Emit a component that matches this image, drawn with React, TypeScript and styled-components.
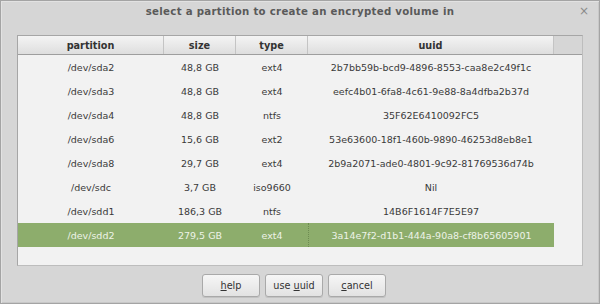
import React from "react"
import styled, { createGlobalStyle } from 'styled-components'

const Global = createGlobalStyle`
html, body {
    margin: 0;
    padding: 0;
    background: #d6d6d6;
}
`

type Row = {
    partition: string
    size: string
    type: string
    uuid: string
}

const rows: Row[] = [
    { partition: '/dev/sda2', size: '48,8 GB', type: 'ext4', uuid: '2b7bb59b-bcd9-4896-8553-caa8e2c49f1c' },
    { partition: '/dev/sda3', size: '48,8 GB', type: 'ext4', uuid: 'eefc4b01-6fa8-4c61-9e88-8a4dfba2b37d' },
    { partition: '/dev/sda4', size: '48,8 GB', type: 'ntfs', uuid: '35F62E6410092FC5' },
    { partition: '/dev/sda6', size: '15,6 GB', type: 'ext2', uuid: '53e63600-18f1-460b-9890-46253d8eb8e1' },
    { partition: '/dev/sda8', size: '29,7 GB', type: 'ext4', uuid: '2b9a2071-ade0-4801-9c92-81769536d74b' },
    { partition: '/dev/sdc', size: '3,7 GB', type: 'iso9660', uuid: 'Nil' },
    { partition: '/dev/sdd1', size: '186,3 GB', type: 'ntfs', uuid: '14B6F1614F7E5E97' },
    { partition: '/dev/sdd2', size: '279,5 GB', type: 'ext4', uuid: '3a14e7f2-d1b1-444a-90a8-cf8b65605901' },
]

const selected = 7

const App: React.FC = () => (
    <>
        <Global />
        <Window>
            <TitleBar>
                <Title>select a partition to create an encrypted volume in</Title>
                <Close>×</Close>
            </TitleBar>
            <Body>
                <Table>
                    <HeaderRow>
                        <HeadCell>partition</HeadCell>
                        <HeadCell>size</HeadCell>
                        <HeadCell>type</HeadCell>
                        <HeadCell>uuid</HeadCell>
                        <HeadFiller />
                    </HeaderRow>
                    <List>
                        {rows.map((r, i) => (
                            <TableRow key={r.partition}>
                                <Cell selected={i === selected}>{r.partition}</Cell>
                                <Cell selected={i === selected}>{r.size}</Cell>
                                <Cell selected={i === selected}>{r.type}</Cell>
                                <Cell selected={i === selected} focused={i === selected}>{r.uuid}</Cell>
                                <div />
                            </TableRow>
                        ))}
                    </List>
                </Table>
                <Buttons>
                    <Btn><u>h</u>elp</Btn>
                    <Btn>use <u>u</u>uid</Btn>
                    <Btn><u>c</u>ancel</Btn>
                </Buttons>
            </Body>
        </Window>
    </>
)

const Window = styled.div`
width: 600px;
height: 304px;
box-sizing: border-box;
border: 1px solid #a4a4a4;
box-shadow: inset 1px 1px 0 #e2e2e2, inset -1px -1px 0 #c8c8c8;
background: #d6d6d6;
font-family: "DejaVu Sans", sans-serif;
display: flex;
flex-direction: column;
`

const TitleBar = styled.div`
height: 20px;
position: relative;
display: flex;
align-items: center;
justify-content: center;
`

const Title = styled.div`
font-weight: bold;
font-size: 10.2px;
color: #5a5a5a;
letter-spacing: 0.3px;
`

const Close = styled.div`
position: absolute;
right: 10px;
top: 3px;
font-size: 12px;
color: #8a8a8a;
`

const Body = styled.div`
display: flex;
flex-direction: column;
padding: 14px 16px 0 16px;
`

const cols = '146px 72px 72px 246px 1fr'

const Table = styled.div`
height: 231px;
box-sizing: border-box;
border: 1px solid #a6a6a6;
border-right-color: #bdbdbd;
border-bottom-color: #bdbdbd;
background: #f2f2f2;
display: flex;
flex-direction: column;
`

const HeaderRow = styled.div`
display: grid;
grid-template-columns: ${cols};
height: 19px;
box-sizing: border-box;
border-bottom: 1px solid #9e9e9e;
`

const HeadCell = styled.div`
display: flex;
align-items: center;
justify-content: center;
background: linear-gradient(#f4f4f4, #dedede);
border-right: 1px solid #c4c4c4;
font-size: 9.7px;
font-weight: bold;
color: #333;
`

const HeadFiller = styled.div`
background: #d6d6d6;
`

const List = styled.div`
display: flex;
flex-direction: column;
`

const TableRow = styled.div`
display: grid;
grid-template-columns: ${cols};
height: 24px;
`

const Cell = styled.div<{ selected?: boolean, focused?: boolean }>`
display: flex;
align-items: center;
justify-content: center;
font-size: 9.5px;
box-sizing: border-box;
color: ${p => p.selected ? '#eef3e8' : '#3a3a3a'};
background: ${p => p.selected ? '#8dad6c' : 'transparent'};
border-left: ${p => p.focused ? '1px dotted #6e8c52' : 'none'};
`

const Buttons = styled.div`
display: flex;
justify-content: center;
gap: 5px;
margin-top: 8px;
padding-right: 12px;
`

const Btn = styled.button`
width: 58px;
height: 23px;
box-sizing: border-box;
border: 1px solid #a9a9a9;
border-radius: 3px;
background: linear-gradient(#f6f6f6, #e2e2e2);
box-shadow: 0 1px 0 #c2c2c2;
font-family: "DejaVu Sans", sans-serif;
font-size: 9.7px;
color: #333;
padding: 0;
cursor: pointer;
u {
    text-decoration: underline;
}
`

export default App
